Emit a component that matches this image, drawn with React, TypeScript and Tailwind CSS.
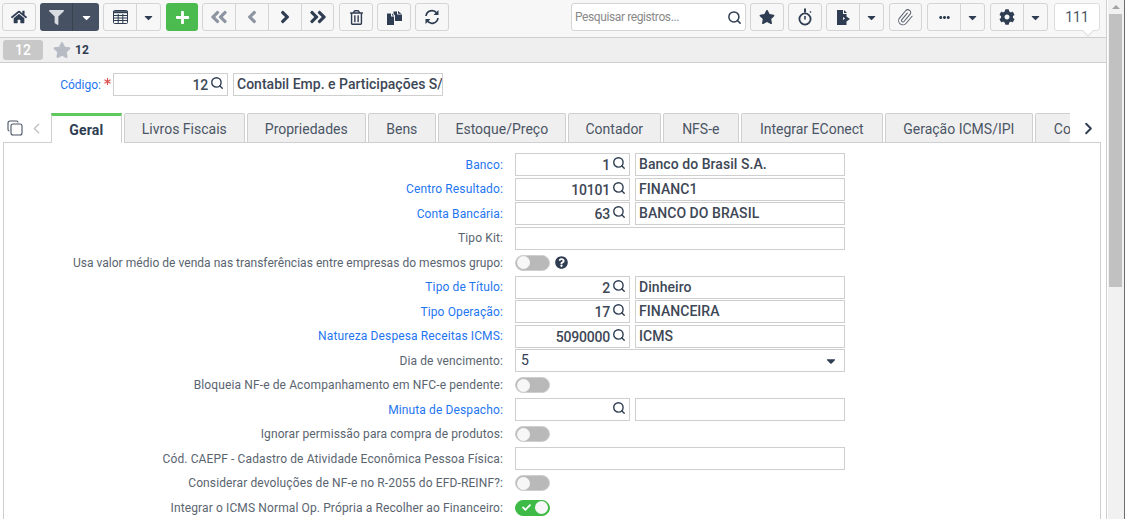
import React from "react";
import {
  FaHome, FaFilter, FaCaretDown, FaPlus, FaAngleDoubleLeft, FaAngleLeft, FaAngleRight,
  FaAngleDoubleRight, FaRegTrashAlt, FaStar, FaCog, FaEllipsisH, FaCheck, FaQuestionCircle, FaAsterisk,
} from "react-icons/fa";
import { FiPaperclip } from "react-icons/fi";
import { Search, ChevronLeft, ChevronRight } from "lucide-react";

const font = { fontFamily: "Roboto, sans-serif" };
const btn = "h-[28px] flex items-center justify-center bg-[#f7f7f7] border border-[#d4d4d4] rounded-[3px] text-[#2f3d52]";
const seg = "h-full flex items-center justify-center";
const blue = "text-[#1f76f0]";

function TableIcon() {
  return (
    <svg width="15" height="14" viewBox="0 0 15 14" fill="none" stroke="#2f3d52" strokeWidth="1">
      <rect x="0.5" y="0.5" width="14" height="13" rx="1" />
      <path d="M0 2.2h15" strokeWidth="2" />
      <path d="M0 5.5h15M0 8h15M0 10.5h15M5.2 4v10M9.8 4v10" />
    </svg>
  );
}
function CopyIcon() {
  return (
    <svg width="15" height="15" viewBox="0 0 15 15" fill="#2f3d52">
      <path d="M0 3.5h4v3h3V15H0z" />
      <path d="M5 3.5L7 5.5H5z" />
      <path d="M6.5 1.5H10v3h5V11H8V5.5L6.5 3.8z" />
      <path d="M11 1l3.5 2.8H11z" />
    </svg>
  );
}
function RefreshIcon() {
  return (
    <svg width="16" height="16" viewBox="0 0 16 16" fill="none" stroke="#2f3d52" strokeWidth="1.7">
      <path d="M2 7A6 6 0 0 1 12.8 4.2" />
      <path d="M14 9A6 6 0 0 1 3.2 11.8" />
      <path d="M14.5 1v5h-5z" fill="#2f3d52" stroke="none" />
      <path d="M1.5 15v-5h5z" fill="#2f3d52" stroke="none" />
    </svg>
  );
}
function TimerIcon() {
  return (
    <svg width="14" height="18" viewBox="0 0 14 18" fill="none" stroke="#2f3d52">
      <circle cx="7" cy="11" r="5.6" strokeWidth="1.8" />
      <path d="M7 0.5v4" strokeWidth="2" />
      <path d="M7 8v3.5" strokeWidth="1.6" />
      <path d="M12 3.5l1 1" strokeWidth="1.5" />
    </svg>
  );
}
function DocIcon() {
  return (
    <svg width="13" height="15" viewBox="0 0 13 15" fill="#2f3d52">
      <path d="M0 0h6v4h3.5v2.5L13 9l-3.5 2.5V15H0z" />
      <path d="M7 0l3 3H7z" />
      <path d="M6 7l2 1.5L6 10z" fill="#f7f7f7" />
    </svg>
  );
}

function Caret({ className = "" }: { className?: string }) {
  return <FaCaretDown size={13} className={className} />;
}

function Split({ w, a, icon }: { w: string; a: string; icon: React.ReactNode }) {
  return (
    <div className={`${btn} ${w}`}>
      <div className={`${seg} ${a} border-r border-[#d4d4d4]`}>{icon}</div>
      <div className={`${seg} flex-1`}><Caret /></div>
    </div>
  );
}

function Lookup({ value, text, tight }: { value: string; text: string; tight?: boolean }) {
  return (
    <div className="flex gap-[5px]">
      <div className="w-[115px] h-[23px] border border-[#cfcfcf] flex items-start justify-end pt-[2px] pr-[3px] gap-[2px]">
        <span className="text-[14px] leading-[18px] font-medium text-[#3d4756] tracking-[-0.2px]">{value}</span>
        <Search size={14} strokeWidth={2.4} className="text-[#2f3d52]" />
      </div>
      <div className={`w-[210px] h-[23px] border border-[#cfcfcf] flex items-center pl-[3px] text-[14px] font-medium text-[#3d4756] whitespace-nowrap overflow-hidden ${tight ? "tracking-[0.01px]" : "tracking-[0.05px]"}`}>
        {text}
      </div>
    </div>
  );
}

function Toggle({ on }: { on?: boolean }) {
  return (
    <div className={`w-[35px] h-[16px] rounded-full flex items-center px-[1px] border ${on ? "bg-[#3dbb46] border-[#3dbb46] justify-between" : "bg-[#b9b9b9] border-[#cfcfcf]"}`}>
      {on && <FaCheck size={9} className="text-white ml-[5px]" />}
      <div className="w-[13px] h-[13px] rounded-full bg-[#f7f7f7]" />
    </div>
  );
}

type Row = { label: string; blue?: boolean; track?: string; node: React.ReactNode };
const Blank = () => <div className="w-[330px] h-[23px] border border-[#cfcfcf]" />;
const rows: Row[] = [
  { label: "Banco:", blue: true, node: <Lookup value="1" text="Banco do Brasil S.A." /> },
  { label: "Centro Resultado:", blue: true, node: <Lookup value="10101" text="FINANC1" /> },
  { label: "Conta Bancária:", blue: true, node: <Lookup value="63" text="BANCO DO BRASIL" /> },
  { label: "Tipo Kit:", node: <Blank /> },
  {
    label: "Usa valor médio de venda nas transferências entre empresas do mesmos grupo:",
    track: "tracking-[0.03px]",
    node: (
      <div className="flex items-center gap-[5px]">
        <Toggle />
        <FaQuestionCircle size={13} className="text-[#2f3d52]" />
      </div>
    ),
  },
  { label: "Tipo de Título:", blue: true, node: <Lookup value="2" text="Dinheiro" /> },
  { label: "Tipo Operação:", blue: true, node: <Lookup value="17" text="FINANCEIRA" /> },
  { label: "Natureza Despesa Receitas ICMS:", blue: true, node: <Lookup value="5090000" text="ICMS" /> },
  {
    label: "Dia de vencimento:",
    node: (
      <div className="w-[330px] h-[23px] border border-[#cfcfcf] flex items-center justify-between pl-[5px] pr-[6px] text-[14px] text-[#2f3d52]">
        <span>5</span>
        <FaCaretDown size={14} />
      </div>
    ),
  },
  { label: "Bloqueia NF-e de Acompanhamento em NFC-e pendente:", node: <Toggle /> },
  { label: "Minuta de Despacho:", blue: true, node: <Lookup value="" text="" /> },
  { label: "Ignorar permissão para compra de produtos:", node: <Toggle /> },
  { label: "Cód. CAEPF - Cadastro de Atividade Econômica Pessoa Física:", node: <Blank /> },
  { label: "Considerar devoluções de NF-e no R-2055 do EFD-REINF?:", node: <Toggle /> },
  { label: "Integrar o ICMS Normal Op. Própria a Recolher ao Financeiro:", node: <Toggle on /> },
];

const tabs = [
  ["Livros Fiscais", "w-[121px]"],
  ["Propriedades", "w-[119px]"],
  ["Bens", "w-[68px]"],
  ["Estoque/Preço", "w-[128px]"],
  ["Contador", "w-[93px]"],
  ["NFS-e", "w-[76px]"],
  ["Integrar EConect", "w-[142px]"],
  ["Geração ICMS/IPI", "w-[148px]"],
];

export default function App() {
  return (
    <div className="w-[1125px] h-[519px] overflow-hidden flex bg-white" style={font}>
      <div className="w-[1107px] h-full flex flex-col shrink-0">
        {/* toolbar */}
        <div className="relative h-[38px] shrink-0 bg-[#f7f7f7] border-b border-r border-[#cfcfcf] pt-[3px] pl-[2px] flex items-start text-[#2f3d52]">
          <div className={`${btn} w-[34px]`}><FaHome size={16} /></div>
          <div className="ml-[4px] h-[28px] w-[59px] flex rounded-[3px] bg-[#465264] text-white">
            <div className={`${seg} w-[33px] border-r border-[#39424f]`}><FaFilter size={15} className="text-[#d8dbdf]" /></div>
            <div className={`${seg} flex-1`}><Caret /></div>
          </div>
          <div className="ml-[4px]"><Split w="w-[58px]" a="w-[33px]" icon={<TableIcon />} /></div>
          <div className="ml-[5px] h-[28px] w-[32px] flex items-center justify-center rounded-[3px] bg-[#4cbb4f] text-white"><FaPlus size={15} /></div>
          <div className={`${btn} ml-[4px] w-[132px]`}>
            <div className={`${seg} w-[33px] border-r border-[#d4d4d4] text-[#8c95a1]`}><FaAngleDoubleLeft size={20} /></div>
            <div className={`${seg} w-[33px] border-r border-[#d4d4d4] text-[#8c95a1]`}><FaAngleLeft size={20} /></div>
            <div className={`${seg} w-[33px] border-r border-[#d4d4d4]`}><FaAngleRight size={20} /></div>
            <div className={`${seg} flex-1`}><FaAngleDoubleRight size={20} /></div>
          </div>
          <div className={`${btn} ml-[5px] w-[34px]`}><FaRegTrashAlt size={15} /></div>
          <div className={`${btn} ml-[4px] w-[34px]`}><CopyIcon /></div>
          <div className={`${btn} ml-[4px] w-[34px]`}><RefreshIcon /></div>

          <div className="ml-[122px] h-[28px] w-[175px] bg-white border border-[#d4d4d4] rounded-[3px] flex items-center justify-between pl-[3px] pr-[3px] text-[12px] tracking-[-0.4px] text-[#8a8a8a]">
            <span>Pesquisar registros...</span>
            <Search size={15} strokeWidth={2.4} className="text-[#2f3d52]" />
          </div>
          <div className={`${btn} ml-[4px] w-[34px]`}><FaStar size={16} /></div>
          <div className={`${btn} ml-[4px] w-[34px]`}><TimerIcon /></div>
          <div className="ml-[4px]"><Split w="w-[58px]" a="w-[33px]" icon={<DocIcon />} /></div>
          <div className={`${btn} ml-[5px] w-[33px]`}><FiPaperclip size={17} strokeWidth={1.4} className="text-[#555f6c] rotate-[-5deg]" /></div>
          <div className="ml-[5px]"><Split w="w-[58px]" a="w-[33px]" icon={<FaEllipsisH size={11} />} /></div>
          <div className="ml-[5px]"><Split w="w-[58px]" a="w-[33px]" icon={<FaCog size={16} />} /></div>
          <div className="ml-[6px] relative h-[28px] w-[46px] bg-white border border-[#dedede] rounded-[3px] flex items-center justify-center text-[14px] text-[#4a5565]">
            111
            <div className="absolute left-[29px] bottom-[-5px] w-[8px] h-[8px] bg-white border-r border-b border-[#dedede] rotate-45" />
          </div>
        </div>

        {/* breadcrumb bar */}
        <div className="h-[25px] shrink-0 bg-[#efefef] border-b border-r border-[#cfcfcf] flex items-center pl-[3px]">
          <div className="w-[40px] h-[20px] rounded-[3px] bg-[#c8c8c8] text-white text-[14px] font-medium flex items-center justify-center">12</div>
          <FaStar size={18} className="ml-[10px] text-[#b7bcc4]" />
          <span className="ml-[4px] text-[12px] font-bold text-[#2f3d52]">12</span>
        </div>

        {/* main */}
        <div className="flex-1 min-h-0 border-r border-[#cfcfcf] flex flex-col">
          <div className="h-[50px] shrink-0 flex pt-[10px]">
            <div className={`w-[101px] h-[23px] flex items-center justify-end text-[12px] ${blue}`}>Código:</div>
            <FaAsterisk size={7} className="ml-[3px] mt-[5px] text-[#d9534f]" />
            <div className="ml-[2px]">
              <Lookup value="12" text="Contabil Emp. e Participações S/" tight />
            </div>
          </div>

          {/* tabs */}
          <div className="h-[30px] shrink-0 flex items-end relative">
            <div className="w-[51px] h-full flex items-center pl-[7px] gap-[5px]">
              <svg width="16" height="16" viewBox="0 0 16 16" fill="none" stroke="#4a5565" strokeWidth="1.1">
                <rect x="4" y="4" width="11" height="11" rx="2" />
                <path d="M2.5 11A1.5 1.5 0 0 1 1 9.5V3a2 2 0 0 1 2-2h6.5A1.5 1.5 0 0 1 11 2.5" />
              </svg>
              <ChevronLeft size={17} strokeWidth={2.2} className="text-[#c4c4c4]" />
            </div>
            <div className="w-[71px] h-full bg-white border-t-[3px] border-t-[#5dc95f] border-x border-x-[#cfcfcf] pt-[1px] flex items-center justify-center text-[14px] tracking-[0.2px] font-bold text-[#2f3d52] mr-[2px] relative z-10">
              Geral
            </div>
            <div className="flex h-full w-[948px] overflow-hidden border-b border-[#cfcfcf] gap-[2px]">
              {tabs.map(([t, w]) => (
                <div key={t} className={`${w} shrink-0 h-full bg-[#f0efef] border border-b-0 border-[#cfcfcf] rounded-t-[2px] pt-[3px] flex items-center justify-center text-[14px] text-[#4a5565]`}>{t}</div>
              ))}
              <div className="w-[60px] shrink-0 h-full bg-[#f0efef] border border-b-0 border-[#cfcfcf] rounded-t-[2px] pl-[18px] pt-[3px] flex items-center text-[14px] text-[#4a5565] whitespace-nowrap">Contas</div>
            </div>
            <div className="w-[36px] h-full flex items-center justify-center text-[#2f3d52]"><ChevronRight size={19} strokeWidth={2.4} /></div>
          </div>

          {/* panel */}
          <div className="flex-1 min-h-0 ml-[3px] mr-[5px] border-l border-r border-[#cfcfcf] pt-[11px] flex flex-col gap-[1.5px] overflow-hidden relative -mt-[1px]">
            <div className="absolute top-0 left-0 w-[47px] h-[1px] bg-[#cfcfcf]" />
            <div className="absolute top-0 right-0 w-[30px] h-[1px] bg-[#cfcfcf]" />
            {rows.map((r) => (
              <div key={r.label} className="flex h-[23px] shrink-0 items-center">
                <div className={`w-[499px] text-right text-[12px] whitespace-nowrap ${r.track ?? "tracking-[0.12px]"} ${r.blue ? blue : "text-[#5a6470]"}`}>{r.label}</div>
                <div className="ml-[12px]">{r.node}</div>
              </div>
            ))}
          </div>
        </div>
      </div>

      {/* scrollbar */}
      <div className="ml-[1px] w-[17px] h-full bg-[#f1f1f1] border-r border-[#6b6b6b] flex flex-col items-start pl-[1px] pt-[5px] shrink-0">
        <div className="ml-[3px] w-0 h-0 border-l-[4px] border-r-[4px] border-b-[4px] border-l-transparent border-r-transparent border-b-[#a3a3a3]" />
        <div className="w-[13px] h-[273px] bg-[#c1c1c1] mt-[5px]" />
      </div>
    </div>
  );
}
